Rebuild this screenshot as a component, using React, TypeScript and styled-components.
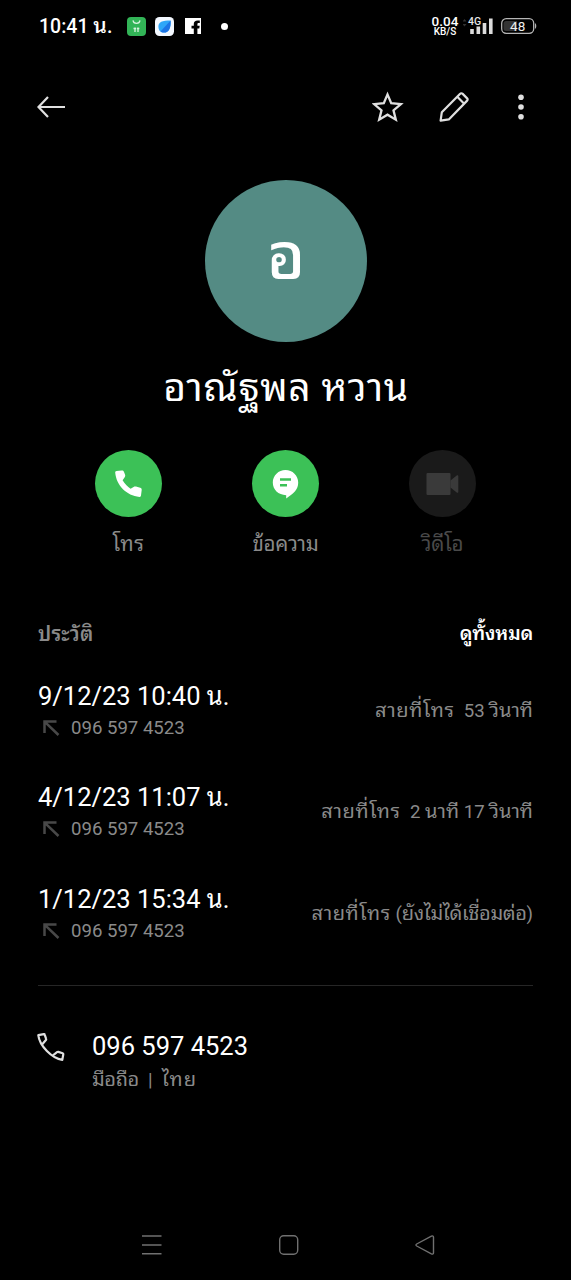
import React from "react";
import styled, { createGlobalStyle } from "styled-components";

const GlobalStyle = createGlobalStyle`
  * { box-sizing: border-box; }
  html, body { margin: 0; background: #000; }
  body { font-family: Roboto, "Noto Sans Thai Looped", "Noto Looped Thai", "Droid Sans Thai", Waree, Loma, Garuda, Umpush, "Noto Sans Thai", "Noto Sans", sans-serif; color: #fff; }
  p, h1, h2 { margin: 0; font-weight: 400; }
`;

const Screen = styled.main`
  width: 571px;
  height: 1280px;
  background: #000;
  display: flex;
  flex-direction: column;
  overflow: hidden;
`;

const Text = styled.p<{ $size: number; $line: number; $color?: string; $weight?: number; $spacing?: number }>`
  font-size: ${(p) => p.$size}px;
  line-height: ${(p) => p.$line}px;
  height: ${(p) => p.$line}px;
  color: ${(p) => p.$color ?? "#fff"};
  font-weight: ${(p) => p.$weight ?? 400};
  letter-spacing: ${(p) => p.$spacing ?? 0}px;
  white-space: pre;
`;

const Thai = styled.span<{ $scale: number; $spacing: number }>`
  font-size: ${(p) => p.$scale}em;
  letter-spacing: ${(p) => p.$spacing}em;
`;

const StatusBar = styled.header`
  height: 52px;
  padding: 0 34px 0 39px;
  display: flex;
  align-items: center;
  justify-content: space-between;
`;

const StatusLeft = styled.div`
  display: flex;
  align-items: center;
`;

const AppIcons = styled.div`
  display: flex;
  align-items: center;
  gap: 9px;
  margin-left: 15px;
`;

const Dot = styled.span`
  width: 7px;
  height: 7px;
  margin-left: 20px;
  border-radius: 50%;
  background: #fff;
`;

const StatusRight = styled.div`
  display: flex;
  align-items: center;
`;

const NetSpeed = styled.div`
  width: 28px;
  margin-right: 4px;
  display: flex;
  flex-direction: column;
  align-items: center;
`;

const Toolbar = styled.nav`
  height: 109px;
  padding: 0 34px 0 37px;
  display: flex;
  align-items: center;
  justify-content: space-between;
`;

const ToolbarActions = styled.div`
  display: flex;
  align-items: center;
  gap: 34.5px;
`;

const Profile = styled.section`
  padding: 18.5px 0 0 1px;
  display: flex;
  flex-direction: column;
  align-items: center;
`;

const Avatar = styled.div`
  width: 162px;
  height: 162px;
  padding-bottom: 7px;
  border-radius: 50%;
  background: #548b84;
  display: flex;
  align-items: center;
  justify-content: center;
`;

const Name = styled.h1`
  height: 60px;
  margin-top: 16px;
  font-size: 39px;
  line-height: 60px;
  letter-spacing: 0.6px;
  white-space: pre;
`;

const Actions = styled.section`
  margin-top: 32.5px;
  padding: 0 50px;
  display: grid;
  grid-template-columns: repeat(3, 1fr);
`;

const Action = styled.div`
  display: flex;
  flex-direction: column;
  align-items: center;
  gap: 11px;
`;

const ActionButton = styled.div<{ $disabled?: boolean }>`
  width: 67px;
  height: 67px;
  border-radius: 50%;
  background: ${(p) => (p.$disabled ? "#1a1a1a" : "#3cc157")};
  display: flex;
  align-items: center;
  justify-content: center;
`;

const History = styled.section`
  margin: 57px 38px 0 38px;
  border-bottom: 1px solid #262626;
  height: 369px;
`;

const HistoryHeader = styled.div`
  height: 34px;
  display: flex;
  justify-content: space-between;
`;

const CallList = styled.div`
  padding-top: 24.5px;
  display: flex;
  flex-direction: column;
  gap: 33.5px;
`;

const CallRow = styled.article`
  height: 68px;
  display: flex;
  align-items: center;
  justify-content: space-between;
`;

const CallNumber = styled.div`
  display: flex;
  align-items: center;
  gap: 11px;
  padding-left: 5px;
`;

const PhoneRow = styled.section`
  margin: 42px 38px 0 37px;
  display: flex;
  align-items: flex-start;
  gap: 27px;
`;

const PhoneIcon = styled.div`
  padding-top: 4px;
  line-height: 0;
`;

const NavBar = styled.footer`
  margin-top: auto;
  height: 70px;
  padding: 0 136px 0 141px;
  display: flex;
  align-items: center;
  justify-content: space-between;
`;

const calls = [
  { time: "9/12/23 10:40 น.", kind: "สายที่โทร", detail: "  53 วินาที", spacing: 0 },
  { time: "4/12/23 11:07 น.", kind: "สายที่โทร", detail: "  2 นาที 17 วินาที", spacing: 0 },
  { time: "1/12/23 15:34 น.", kind: "สายที่โทร", detail: " (ยังไม่ได้เชื่อมต่อ)", spacing: -0.02 },
];

const withThai = (text: string, spacing = 0, scale = 1.08) =>
  text.split(/([\u0E00-\u0E7F]+)/).map((part, i) =>
    i % 2 ? <Thai key={i} $scale={scale} $spacing={spacing}>{part}</Thai> : part,
  );

const ShopIcon = () => (
  <svg width="19" height="19" viewBox="0 0 19 19">
    <rect width="19" height="19" rx="4" fill="#32b457" />
    <path d="M6 3.400c.5 4 6.500 4 7 0" fill="none" stroke="#d8f3df" strokeWidth="1.200" />
    <path d="M8 10.500v4.500M6.500 11.500h2.500M11 10.500v4.500M9.800 11.500h2.500" stroke="#d8f3df" strokeWidth="1.300" />
  </svg>
);

const BrowserIcon = () => (
  <svg width="19" height="19" viewBox="0 0 19 19">
    <rect width="19" height="19" rx="4.500" fill="#f3f8ff" />
    <path d="M3.400 9.500C3.400 5 7 3.400 15.600 3.400c.4 7.500-1.600 12-6.600 12.200-1.700 0-2.700-.4-3.500-1-1.400-1-2.100-2.900-2.100-5.100z" fill="#2ea6f8" />
    <path d="M15.600 3.400c.4 7.500-1.600 12-6.600 12.200-1.700 0-2.700-.4-3.500-1z" fill="#1c74e6" />
  </svg>
);

const FacebookIcon = () => (
  <svg width="18" height="16" viewBox="-2 0 18 16">
    <path fill="#fff" d="M0 0h16v16h-3.600v-5.600h1.900l.4-2.600h-2.300V6.300c0-.9.4-1.400 1.300-1.400h1.100V2.500h-2C10 2.500 8.800 3.900 8.800 6v1.800H6.500v2.600h2.300V16H0z" />
  </svg>
);

const SignalIcon = () => (
  <svg width="38" height="20" viewBox="0 0 38 20">
    <path d="M-.5 5.500l2-2.500 2 2.500zM-.5 8h4l-2 2.500z" fill="#333" />
    <text x="5" y="9" fontSize="10.500" fontWeight="500" fill="#e6e6e6" fontFamily="Roboto">4G</text>
    <path d="M7.200 13h3.600V18H7.200zM13.500 10.500h3.600V18h-3.600zM19.700 7h3.600v11h-3.600zM26 2.500h3.600V18H26z" fill="#dcdcdc" />
  </svg>
);

const BatteryIcon = () => (
  <svg width="36" height="18" viewBox="0 0 36 18">
    <rect x="0.700" y="1.700" width="32" height="14.600" rx="4.500" fill="none" stroke="#b5b5b5" strokeWidth="1.300" />
    <path d="M5 4h11v10H5a2.500 2.500 0 0 1-2.500-2.500v-5A2.500 2.500 0 0 1 5 4z" fill="#333" />
    <path d="M34 6.200c1.700.5 1.700 5.100 0 5.600z" fill="#b5b5b5" />
    <text x="16.700" y="13.500" textAnchor="middle" fontSize="13.500" fill="#eee" fontFamily="Roboto">48</text>
  </svg>
);

const BackIcon = () => (
  <svg width="28" height="24" viewBox="0 0 28 24" fill="none" stroke="#e0e0e0" strokeWidth="2.200">
    <path d="M11 2L1.500 12l9.500 10M1.500 12H28" />
  </svg>
);

const StarIcon = () => (
  <svg width="32" height="32" viewBox="0 0 32 32" fill="none" stroke="#e0e0e0" strokeWidth="2.300">
    <path d="M15.500 3.400l3.700 8.800 9.700.9-7.400 6.300 2.300 9.300-8.300-5-8.300 5L9.500 19.400l-7.400-6.300 9.700-.9z" />
  </svg>
);

const PencilIcon = () => (
  <svg width="32" height="32" viewBox="1 0 32 32" fill="none" stroke="#e0e0e0" strokeWidth="2.200" strokeLinejoin="round">
    <path d="M2.600 29.600l1.200-8.300L21.900 2.900c.9-.9 1.900-.9 2.800 0l4.200 4.200c.9.900.9 1.900 0 2.800L10.800 28.400zM19.300 5.800l6.900 6.900" />
  </svg>
);

const MoreIcon = () => (
  <svg width="32" height="32" viewBox="0 0 32 32" fill="#e0e0e0">
    <circle cx="16" cy="6.200" r="2.800" />
    <circle cx="16" cy="16" r="2.800" />
    <circle cx="16" cy="25.800" r="2.800" />
  </svg>
);

const CallIcon = () => (
  <svg width="28" height="28" viewBox="0.700 0 28 28" fill="#fff">
    <path d="M.9 2.500C.9 1.500 1.400 1.100 2.300 1l5-.6c1.300-.1 1.900.3 2.400 1.500l1 2.700c.4 1 .3 1.700-.3 2.600L8.300 10.300c2.100 3.300 4.900 6.300 8 8.500l3-1.900c.8-.5 1.500-.6 2.400-.3l4.200 1.200c1.100.3 1.600 1 1.500 2.200l-.7 5.500c-.1 1-.6 1.500-1.600 1.400C12.400 25.500 2.100 16 .9 2.500z" />
  </svg>
);

const MessageIcon = () => (
  <svg width="28" height="30" viewBox="0.500 0 28 30">
    <path d="M14 1c7 0 12.700 5.500 12.700 12.600 0 7.200-4.300 10.700-12 15.800v-3.200C6.700 26.200 1.300 20.500 1.300 13.600 1.300 6.500 7 1 14 1z" fill="#fff" />
    <path d="M8.500 10.500h11M8.500 16.200h7" stroke="#3cc157" strokeWidth="2.500" />
  </svg>
);

const VideoIcon = () => (
  <svg width="34" height="24" viewBox="0.500 0 34 24" fill="#3a3a3a">
    <path d="M2 1h22a1 1 0 0 1 1 1v20a1 1 0 0 1-1 1H2a1 1 0 0 1-1-1V2a1 1 0 0 1 1-1z" />
    <path d="M25 8.500l6.200-5c.8-.6 1.600-.3 1.600.6v15.800c0 .9-.8 1.200-1.600.6l-6.200-5z" />
  </svg>
);

const OutgoingIcon = () => (
  <svg width="17" height="16" viewBox="0 0 17 16" fill="none" stroke="#484848" strokeWidth="2.500">
    <path d="M1.500 13V1.500H13.500M1.800 1.800L15.500 15" />
  </svg>
);

const PhoneOutlineIcon = () => (
  <svg width="28" height="30" viewBox="0 0 28 30" fill="none" stroke="#e0e0e0" strokeWidth="2.200" strokeLinejoin="round">
    <path d="M5.300 12.200L8.900 8c.3-.4.4-.7.200-1.200L7.700 2.600c-.1-.4-.4-.6-.9-.5L1.300 3.200C2.500 14 15 26.500 25.300 27.900L26.300 22.200c.1-.5-.1-.8-.6-1l-4.400-1.300c-.5-.1-.9 0-1.300.3L16 23.300" />
  </svg>
);

const MenuIcon = () => (
  <svg width="22" height="22" viewBox="0 0 22 22" stroke="#707070" strokeWidth="1.500">
    <path d="M1 2h19.500M1 11h19.500M1 19.800h19.500" />
  </svg>
);

const HomeIcon = () => (
  <svg width="20" height="20" viewBox="0 0 20 20" fill="none" stroke="#707070" strokeWidth="1.400">
    <rect x="0.700" y="0.700" width="18" height="18.500" rx="4" />
  </svg>
);

const TriangleIcon = () => (
  <svg width="20" height="20" viewBox="0 0 20 20" fill="none" stroke="#707070" strokeWidth="1.400" strokeLinejoin="round">
    <path d="M1.700 9L16.400 1.200c1.200-.6 2.100-.2 2.100 1.100v15.400c0 1.300-.9 1.700-2.100 1.100L1.700 11c-1-.6-1-1.400 0-2z" />
  </svg>
);

export default function App() {
  return (
    <>
      <GlobalStyle />
      <Screen>
        <StatusBar>
          <StatusLeft>
            <Text $size={19.5} $line={26} $weight={500}>{withThai("10:41 น.", 0, 1.1)}</Text>
            <AppIcons>
              <ShopIcon />
              <BrowserIcon />
              <FacebookIcon />
            </AppIcons>
            <Dot />
          </StatusLeft>
          <StatusRight>
            <NetSpeed>
              <Text $size={13.5} $line={11} $weight={500} $spacing={0.1}>0.04</Text>
              <Text $size={10} $line={9} $weight={500}>KB/S</Text>
            </NetSpeed>
            <SignalIcon />
            <BatteryIcon />
          </StatusRight>
        </StatusBar>

        <Toolbar>
          <BackIcon />
          <ToolbarActions>
            <StarIcon />
            <PencilIcon />
            <MoreIcon />
          </ToolbarActions>
        </Toolbar>

        <Profile>
          <Avatar>
            <Text $size={65} $line={80} $weight={500}>อ</Text>
          </Avatar>
          <Name>อาณัฐพล หวาน</Name>
        </Profile>

        <Actions>
          <Action>
            <ActionButton><CallIcon /></ActionButton>
            <Text $size={19} $line={32} $color="#8a8a8a">{withThai("โทร", 0.03)}</Text>
          </Action>
          <Action>
            <ActionButton><MessageIcon /></ActionButton>
            <Text $size={19} $line={32} $color="#8a8a8a">{withThai("ข้อความ", -0.01)}</Text>
          </Action>
          <Action>
            <ActionButton $disabled><VideoIcon /></ActionButton>
            <Text $size={19} $line={32} $color="#4a4a4a">{withThai("วิดีโอ", -0.01)}</Text>
          </Action>
        </Actions>

        <History>
          <HistoryHeader>
            <Text $size={18.5} $line={34} $weight={600} $color="#8a8a8a">{withThai("ประวัติ", 0.01)}</Text>
            <Text $size={18.5} $line={34} $weight={600}>{withThai("ดูทั้งหมด", -0.01, 1.04)}</Text>
          </HistoryHeader>
          <CallList>
            {calls.map((call) => (
              <CallRow key={call.time}>
                <div>
                  <Text $size={25.5} $line={36}>{call.time}</Text>
                  <CallNumber>
                    <OutgoingIcon />
                    <Text $size={18.6} $line={28} $color="#8a8a8a">096 597 4523</Text>
                  </CallNumber>
                </div>
                <Text $size={18.6} $line={32} $color="#8a8a8a">
                  {withThai(call.kind, 0.03)}
                  {withThai(call.detail, call.spacing)}
                </Text>
              </CallRow>
            ))}
          </CallList>
        </History>

        <PhoneRow>
          <PhoneIcon><PhoneOutlineIcon /></PhoneIcon>
          <div>
            <Text $size={25.5} $line={36}>096 597 4523</Text>
            <Text $size={18.6} $line={30} $color="#8a8a8a">
              {withThai("มือถือ", -0.02)}
              {"  |  "}
              {withThai("ไทย", 0.05)}
            </Text>
          </div>
        </PhoneRow>

        <NavBar>
          <MenuIcon />
          <HomeIcon />
          <TriangleIcon />
        </NavBar>
      </Screen>
    </>
  );
}
